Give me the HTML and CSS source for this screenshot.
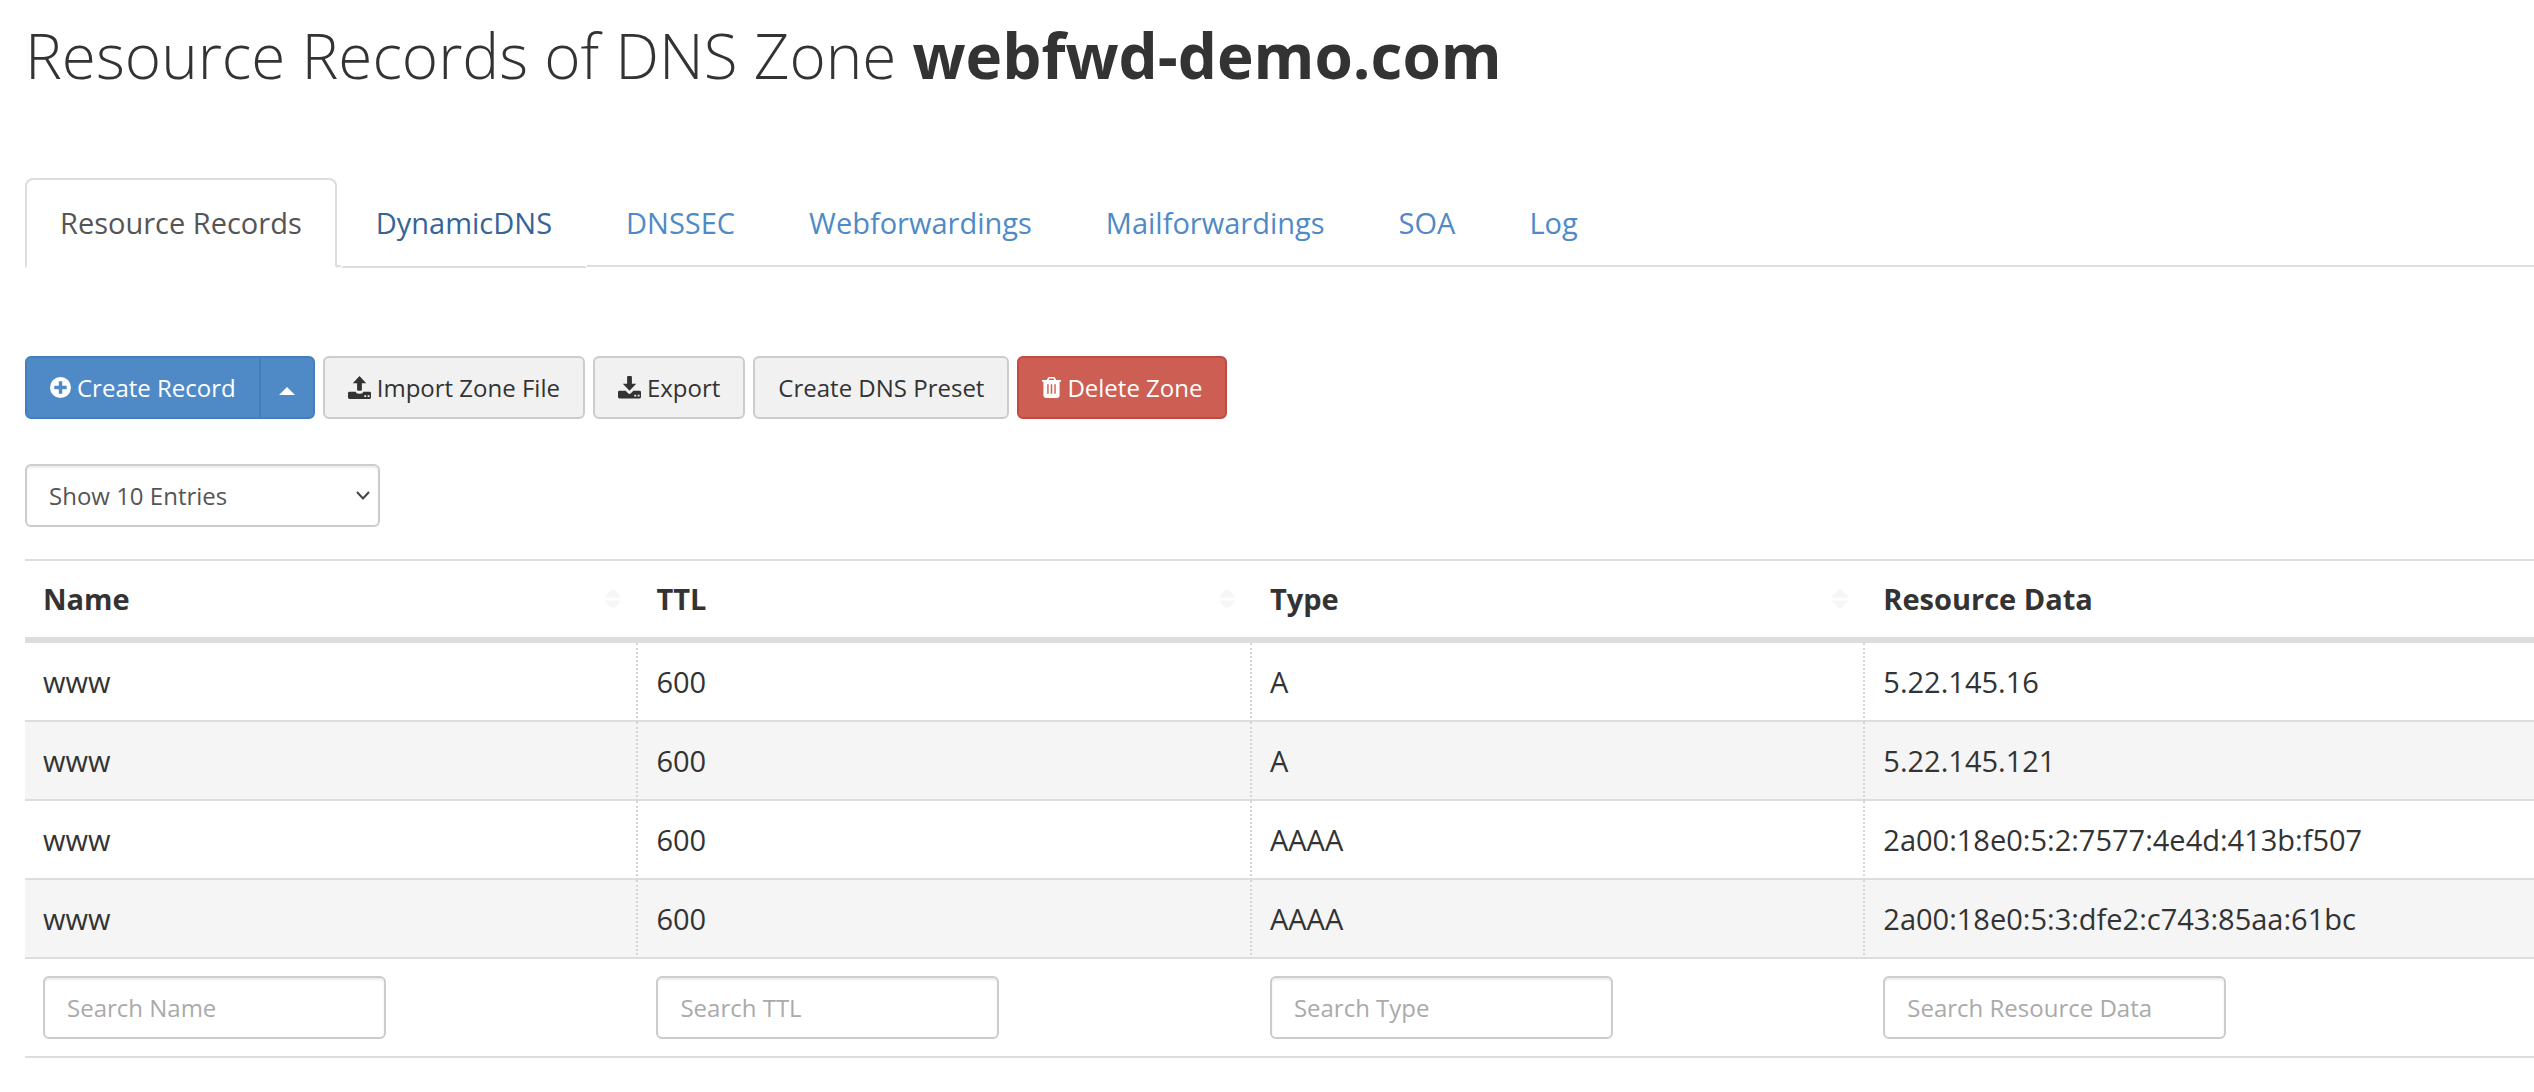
FILE: index.html
```html
<!DOCTYPE html>
<html lang="en">
<head>
<meta charset="utf-8">
<title>Resource Records of DNS Zone webfwd-demo.com</title>
<link rel="stylesheet" href="styles.css">
</head>
<body>
<svg class="sprite" aria-hidden="true">
  <symbol id="sort" viewBox="0 0 16 20"><path d="M1 8.500Q-.5 8.500 .5 7L7 .6Q8 -.3 9 .6L15.500 7Q16.500 8.500 15 8.500ZM1 11.500Q-.5 11.500 .5 13L7 19.400Q8 20.300 9 19.400L15.500 13Q16.500 11.500 15 11.500Z"/></symbol>
</svg>
<main class="page">
  <h1 class="title">Resource Records of DNS Zone <strong>webfwd-demo.com</strong></h1>

  <nav class="tabs" aria-label="Zone sections">
    <a class="tab tab-active" href="#records" aria-current="page">Resource Records</a>
    <a class="tab tab-hover" href="#dynamicdns">DynamicDNS</a>
    <a class="tab" href="#dnssec">DNSSEC</a>
    <a class="tab" href="#webforwardings">Webforwardings</a>
    <a class="tab" href="#mailforwardings">Mailforwardings</a>
    <a class="tab" href="#soa">SOA</a>
    <a class="tab" href="#log">Log</a>
  </nav>

  <div class="toolbar">
    <div class="split">
      <button class="btn btn-primary" type="button"><svg class="icon" width="21" height="21" viewBox="0 0 22 22" aria-hidden="true"><path fill-rule="evenodd" d="M11 0a11 11 0 1 0 0 22a11 11 0 1 0 0-22ZM9.200 4.500h3.600v4.700h4.700v3.600h-4.700v4.700H9.200v-4.700H4.500V9.200h4.700Z"/></svg>Create Record</button>
      <button class="btn btn-primary btn-caret" type="button" aria-label="More create options"><svg class="caret" width="16" height="8" viewBox="0 0 16 8" aria-hidden="true"><path d="M0 8L8 0l8 8Z"/></svg></button>
    </div>
    <button class="btn" type="button"><svg class="icon" width="23" height="23" viewBox="0 0 24 24" aria-hidden="true"><path fill-rule="evenodd" d="M12 0l7 7.500h-4.500V14q0 1.500-1.500 1.500h-2q-1.500 0-1.500-1.500V7.500H5ZM1.500 16.500H8q.5 2 3 2h2q2.500 0 3-2h6.500q1.500 0 1.500 1.500v4.500q0 1.500-1.500 1.500h-21Q0 24 0 22.500V18q0-1.500 1.500-1.500ZM17 20v2h2v-2ZM20.500 20v2h2v-2Z"/></svg>Import Zone File</button>
    <button class="btn" type="button"><svg class="icon" width="23" height="23" viewBox="0 0 24 24" aria-hidden="true"><path fill-rule="evenodd" d="M10.500 0h3q1 0 1 1v7H19l-7 7.500L5 8h4.500V1q0-1 1-1ZM1.500 15.500H8l2.500 2.600q1.500 1.200 3 0L16 15.500h6.500q1.500 0 1.500 1.500v5q0 1.500-1.500 1.500h-21Q0 23.500 0 22v-5q0-1.500 1.500-1.500ZM17 19.500v2h2v-2ZM20.500 19.500v2h2v-2Z"/></svg>Export</button>
    <button class="btn" type="button">Create DNS Preset</button>
    <button class="btn btn-danger" type="button"><svg class="icon" width="19" height="21" viewBox="0 0 20 22" aria-hidden="true"><path fill-rule="evenodd" d="M0 3h5l1.300-2.300Q6.800 0 7.500 0h5q.7 0 1.200.7L15 3h5v2h-1.500v14.500q0 2.500-2.500 2.500H4q-2.500 0-2.500-2.500V5H0ZM7 3h6l-.8-1.500H7.800ZM5.500 7.500v10H7v-10ZM9.200 7.500v10h1.600v-10ZM13 7.500v10h1.500v-10Z"/></svg>Delete Zone</button>
  </div>

  <div class="length">
    <select class="field length-select" aria-label="Entries shown">
      <option>Show 10 Entries</option>
      <option>Show 25 Entries</option>
      <option>Show 50 Entries</option>
    </select>
    <svg class="chevron" width="14" height="9" viewBox="0 0 14 9" aria-hidden="true"><path d="M1 1l6 6.500L13 1"/></svg>
  </div>

  <table class="records">
    <colgroup><col class="col"><col class="col"><col class="col"><col></colgroup>
    <thead>
      <tr>
        <th scope="col"><div class="head">Name<svg class="sort" width="16" height="20" aria-hidden="true"><use href="#sort"/></svg></div></th>
        <th scope="col"><div class="head">TTL<svg class="sort" width="16" height="20" aria-hidden="true"><use href="#sort"/></svg></div></th>
        <th scope="col"><div class="head">Type<svg class="sort" width="16" height="20" aria-hidden="true"><use href="#sort"/></svg></div></th>
        <th scope="col"><div class="head">Resource Data</div></th>
      </tr>
    </thead>
    <tbody>
      <tr><td>www</td><td>600</td><td>A</td><td>5.22.145.16</td></tr>
      <tr><td>www</td><td>600</td><td>A</td><td>5.22.145.121</td></tr>
      <tr><td>www</td><td>600</td><td>AAAA</td><td>2a00:18e0:5:2:7577:4e4d:413b:f507</td></tr>
      <tr><td>www</td><td>600</td><td>AAAA</td><td>2a00:18e0:5:3:dfe2:c743:85aa:61bc</td></tr>
    </tbody>
    <tfoot>
      <tr>
        <td><input class="field search" type="text" placeholder="Search Name" aria-label="Search Name"></td>
        <td><input class="field search" type="text" placeholder="Search TTL" aria-label="Search TTL"></td>
        <td><input class="field search" type="text" placeholder="Search Type" aria-label="Search Type"></td>
        <td><input class="field search" type="text" placeholder="Search Resource Data" aria-label="Search Resource Data"></td>
      </tr>
    </tfoot>
  </table>
</main>
</body>
</html>
```
FILE: styles.css
```css
* {
  box-sizing: border-box;
}

body {
  margin: 0;
  background: #fff;
  color: #333;
  font-family: "Open Sans", "Noto Sans", sans-serif;
  font-size: 29px;
  line-height: 43px;
}

.sprite {
  display: none;
}

.page {
  padding: 19px 0 34px 25px;
}

.title {
  margin: 0 0 87px;
  font-size: 62px;
  font-weight: 300;
  line-height: 72px;
}

.title strong {
  font-weight: 700;
}

/* Section tabs */
.tabs {
  display: flex;
  gap: 4px;
  border-bottom: 2px solid #ddd;
}

.tab {
  margin-bottom: -3px;
  padding: 21px 33px 22px;
  border: 2px solid transparent;
  border-radius: 8px 8px 0 0;
  color: #4f8ac7;
  text-decoration: none;
}

.tab-active {
  border-color: #ddd;
  border-bottom-color: #fff;
  background: #fff;
  color: #555;
}

.tab-hover {
  border-bottom-color: #ddd;
  background: #fff;
  color: #366495;
}

/* Buttons */
.toolbar {
  display: flex;
  flex-wrap: wrap;
  gap: 8px;
  margin-top: 89px;
}

.split {
  display: flex;
}

.btn {
  display: flex;
  align-items: center;
  gap: 6px;
  height: 63px;
  padding: 0 23px;
  border: 2px solid #ccc;
  border-radius: 6px;
  background: #f1f1f1;
  color: #333;
  font: inherit;
  font-size: 24px;
}

.btn-primary {
  border-color: #437fbf;
  background: #4f8ac7;
  color: #fff;
}

.split .btn:first-child {
  border-radius: 6px 0 0 6px;
}

.split .btn-caret {
  margin-left: -2px;
  padding: 0 18px;
  border-radius: 0 6px 6px 0;
}

.btn-danger {
  border-color: #c34a3f;
  background: #cc5e53;
  color: #fff;
}

.icon,
.caret {
  fill: currentColor;
}

.caret {
  margin-top: 6px;
}

/* Form fields */
.field {
  height: 63px;
  padding: 0 22px;
  border: 2px solid #ccc;
  border-radius: 6px;
  background: #fff;
  box-shadow: inset 0 2px 2px rgba(0, 0, 0, .075);
  color: #555;
  font: inherit;
  font-size: 24px;
}

.field::placeholder {
  color: #aaa;
  opacity: 1;
}

.length {
  display: grid;
  align-items: center;
  width: 355px;
  margin: 45px 0 32px;
}

.length-select {
  grid-area: 1 / 1;
  width: 100%;
  appearance: none;
}

.chevron {
  grid-area: 1 / 1;
  justify-self: end;
  margin-right: 10px;
  fill: none;
  stroke: #444;
  stroke-width: 2;
  pointer-events: none;
}

.search {
  display: block;
  width: 343px;
}

/* Records table */
.records {
  width: 100%;
  border-top: 2px solid #ddd;
  border-bottom: 2px solid #ddd;
  border-spacing: 0;
  table-layout: fixed;
}

.col {
  width: 24.45%;
}

.records th {
  padding: 16px 17px 17px 18px;
  border-bottom: 6px solid #ddd;
  font-weight: 700;
  text-align: left;
}

.head {
  display: flex;
  align-items: center;
  justify-content: space-between;
}

.sort {
  fill: #f6f6f6;
}

.records td {
  padding: 17px 18px;
}

.records tbody td {
  border-bottom: 2px solid #ddd;
}

.records tbody td:not(:last-child) {
  border-right: 2px dotted #d5d5d5;
}

.records tbody tr:nth-child(even) {
  background: #f5f5f5;
}
```
